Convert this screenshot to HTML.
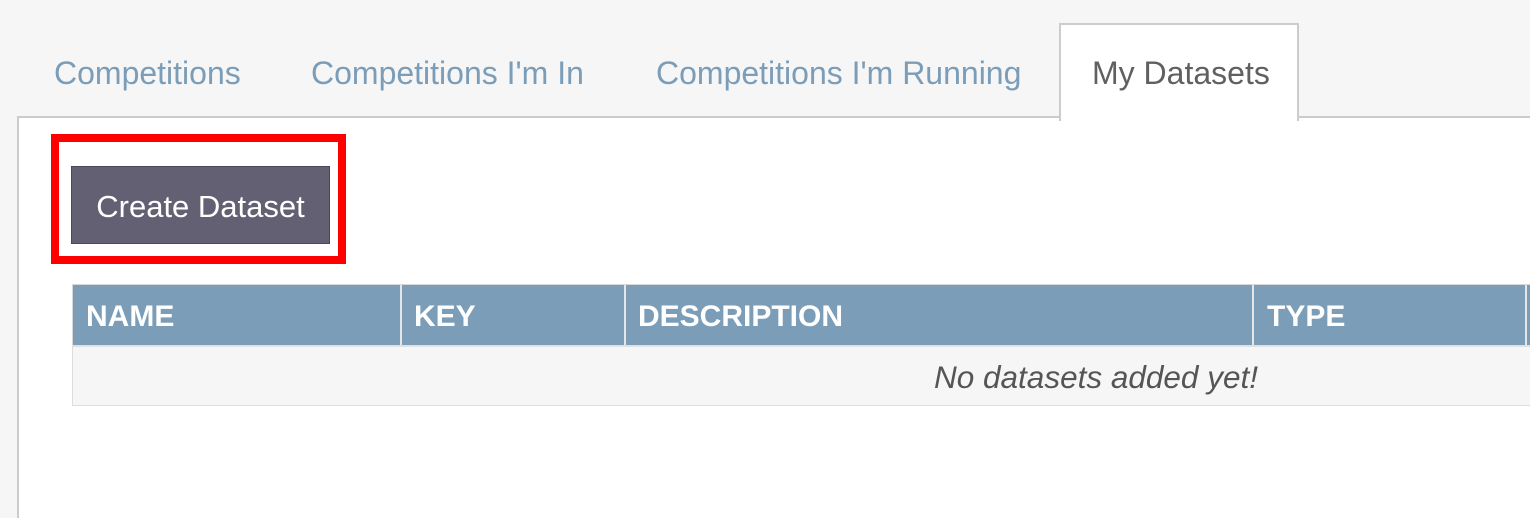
<!DOCTYPE html>
<html><head><style>
body{margin:0;width:1530px;height:500px;background:#f6f6f6;font-family:"Liberation Sans",sans-serif;overflow:hidden;position:relative}
.a{position:absolute;white-space:nowrap}
.tab{color:#7b9db8;font-size:32px;top:55px}
</style></head><body>
<div class="a" style="left:17px;top:116px;width:1600px;height:400px;background:#fff;border-left:2px solid #ccc;border-top:2px solid #ccc"></div>
<div class="a" style="left:1059px;top:23px;width:236px;height:96px;background:#fff;border:2px solid #ccc;border-bottom:none"></div>
<div class="a tab" style="left:54px">Competitions</div>
<div class="a tab" style="left:311px">Competitions I'm In</div>
<div class="a tab" style="left:656px">Competitions I'm Running</div>
<div class="a tab" style="left:1092px;color:#606060">My Datasets</div>
<div class="a" style="left:51px;top:134px;width:279px;height:114px;border:8px solid #f00;background:#fff"></div>
<div class="a" style="left:71px;top:166px;width:257px;height:76px;background:#646073;border:1px solid #4a4858;color:#fff;font-size:31px;line-height:80px;text-align:center">Create Dataset</div>
<div class="a" style="left:72px;top:284px;width:1600px;height:60px;background:#7b9db8;border:1px solid #d8d8d8"></div>
<div class="a" style="left:400px;top:285px;width:2px;height:60px;background:#e6e6e6"></div>
<div class="a" style="left:624px;top:285px;width:2px;height:60px;background:#e6e6e6"></div>
<div class="a" style="left:1252px;top:285px;width:2px;height:60px;background:#e6e6e6"></div>
<div class="a" style="left:1525px;top:285px;width:2px;height:60px;background:#e6e6e6"></div>
<div class="a" style="top:300px;left:86px;color:#fff;font-weight:bold;font-size:30px">NAME</div>
<div class="a" style="top:300px;left:414px;color:#fff;font-weight:bold;font-size:30px">KEY</div>
<div class="a" style="top:300px;left:638px;color:#fff;font-weight:bold;font-size:30px">DESCRIPTION</div>
<div class="a" style="top:300px;left:1267px;color:#fff;font-weight:bold;font-size:30px">TYPE</div>
<div class="a" style="left:72px;top:345px;width:1600px;height:58px;background:#f6f6f6;border:1px solid #ddd;border-top:2px solid #e0e0e0"></div>
<div class="a" style="top:359px;left:934px;color:#555;font-style:italic;font-size:31.5px">No datasets added yet!</div>
</body></html>
